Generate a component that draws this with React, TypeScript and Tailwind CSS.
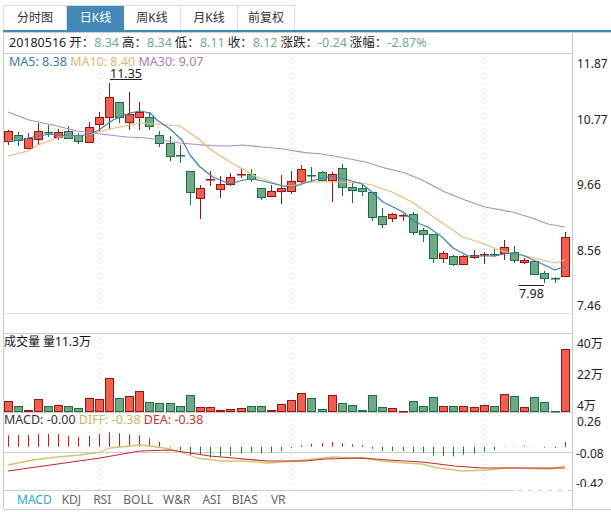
const XS = [8,18,28,38,48,58,68,78,89,99,109,119,129,139,149,159,170,180,190,200,210,220,230,241,251,261,271,281,291,301,311,322,332,342,352,362,372,382,392,403,413,423,433,443,453,463,474,484,494,504,514,524,534,544,555,565];
const G = new Set([1,4,6,7,11,14,15,16,17,18,24,25,30,31,33,34,35,36,37,40,41,42,44,48,50,52,53,54]);
// high, bodyTop, bodyBottom, low
const C: number[][] = [[130,131,141,145],[132,135,140,146],[133,138,148,149],[123,131,139,145],[125,132,133,137],[129,132,137,140],[126,131,138,138],[133,135,141,144],[122,127,142,143],[112,117,124,131],[83,97,117,129],[102,102,117,123],[92,114,122,130],[102,112,117,130],[112,117,126,130],[131,135,143,147],[136,143,156,161],[145,155,156,163],[171,171,192,205],[185,188,198,219],[171,179,180,186],[176,184,189,198],[173,177,184,186],[168,174,174,178],[169,174,179,182],[188,188,197,200],[185,191,196,197],[175,188,191,204],[171,181,191,194],[165,169,181,184],[167,175,175,182],[171,172,180,181],[172,174,180,202],[164,168,187,196],[182,187,190,203],[185,188,191,196],[192,192,217,221],[208,216,224,228],[213,214,218,222],[214,215,215,221],[212,214,232,235],[228,230,234,242],[234,234,258,263],[251,253,258,263],[255,256,264,266],[255,256,264,265],[250,255,257,259],[252,254,254,264],[249,254,254,257],[240,247,253,260],[246,252,260,263],[258,260,262,264],[261,261,274,275],[271,273,278,283],[277,278,278,283],[232,237,276,276]];
const VOL = [401,406,410,399,406,405,406,408,398,399,378,398,396,391,402,403,403,406,395,407,407,410,409,408,406,406,410,404,400,393,398,409,395,403,405,410,395,407,408,411,401,406,397,406,406,406,407,405,406,394,396,407,397,402,411,349];
const MACD = [76,75,75,72,72,72,77,81,78,72,67,70,73,76,85,96,108,122,135,135,143,140,137,130,128,130,128,124,114,105,101,100,96,100,103,105,116,123,123,123,127,128,136,137,139,134,130,125,120,111,111,107,111,113,114,96];
const MA30 = "8,112 29,120 57,126 77,131 100,134 127,137 147,138 180,143 210,145.7 230,146 243,145 263,147 283,149 305,152.7 322,154 345,158 365,162 385,168 405,173 422,180 445,192 465,200 485,207 512,212 532,218 548,224 565,227";
const MA10 = "8,156 28,151 38,145 60,137 70,136 87,135 110,129 140,123 157,124 180,126 200,140 210,149 230,162 257,177 280,185 292,186 305,182 315,182 338,182 362,183 372,185 392,192 412,202 435,218 463,237 482,243 502,251 522,255 538,259 555,263 565,260";
const MA5 = "8,142 20,140 33,137 50,134 67,136 87,135 97,131 100,129.3 113,120 130,113 140,111 150,113 157,120 170,129 182,140 190,155 200,167 213,177 230,184 243,180 253,179 267,182 283,186 293,187 305,183 315,180 332,176 345,179 362,184 372,192 383,202 403,212 415,222 428,227 442,237 453,248 468,256 495,256 508,253 522,255 538,262 555,270 565,266";
const DIFF = "8,465 33,460 57,457 80,455 100,452 110,448 140,445 150,446 170,449 180,452 197,458 220,461 243,461 267,463 283,462 305,460 332,457 362,458 382,461 405,463 422,464 438,468 462,471 488,470 505,468 552,469 565,466";
const DEA = "8,471 100,458 140,451 170,450 190,453 210,456 233,458 267,461 305,461 325,459 362,458 388,460 422,462 455,466 482,468 505,468 565,468";

const RED_F = "#ef5f4d", RED_S = "#9a1212", GRN_F = "#6fa987", GRN_S = "#1a7045";

function Dots({ y1, y2 }: { y1: number; y2: number }) {
  return (
    <>
      {[99.5, 291.5, 484.5].map((x) => (
        <line key={x} x1={x} x2={x} y1={y1} y2={y2} stroke="#c8c8c8" strokeWidth={1} strokeDasharray="1 4" />
      ))}
    </>
  );
}

const TABS = ["分时图", "日K线", "周K线", "月K线", "前复权"];
const SUBS = [
  ["MACD", "ml-[13px] text-[#2fa8d0]"],
  ["KDJ", "ml-[10px]"],
  ["RSI", "ml-[12px]"],
  ["BOLL", "ml-[12px]"],
  ["W&R", "ml-[10px]"],
  ["ASI", "ml-[12px]"],
  ["BIAS", "ml-[11px]"],
  ["VR", "ml-[13px]"],
];
const INFO = [
  ["开：", "8.34"],
  ["高：", "8.34"],
  ["低：", "8.11"],
  ["收：", "8.12"],
  ["涨跌：", "-0.24"],
  ["涨幅：", "-2.87%"],
];

export default function App() {
  return (
    <div className="relative w-[611px] h-[512px] overflow-hidden bg-white font-['Noto_Sans','Noto_Sans_CJK_SC',sans-serif] text-[#222]">
      {/* tabs */}
      <div className="pt-[5px] pl-[3px] h-[30px]">
        <div className="flex w-[293px] h-[25px] border-t border-l border-[#ddd]">
          {TABS.map((t, i) => (
            <div
              key={t}
              className={
                i === 0
                  ? "w-[63px] h-[24px] flex items-center justify-center text-[12px] border-r border-[#ddd] text-[#333]"
                  : i === 1
                  ? "w-[57px] h-[24px] flex items-center justify-center text-[12px] bg-[#4288b8] text-white"
                  : "w-[57px] h-[24px] flex items-center justify-center text-[12px] border-r border-[#ddd] text-[#333]"
              }
            >
              {t}
            </div>
          ))}
        </div>
      </div>
      <div className="ml-[3px] h-[2px] bg-[#4288b8]" />
      <div className="ml-[3px] h-px bg-[#d0d0d0]" />

      {/* main */}
      <div className="flex ml-[3px] w-[608px] h-[477px] border-b border-[#ccc]">
        <div className="w-[569px] border-l border-[#ccc] flex flex-col">
          <div className="h-[21px] border-b border-[#ccc] flex items-center pl-[5px] text-[12.5px] whitespace-pre leading-none">
            <span className="mr-[3px]">20180516</span>
            {INFO.map(([k, v]) => (
              <span key={k} className="mr-[3px]">
                {k}
                <span className="text-[#73ab8a]">{v}</span>
              </span>
            ))}
          </div>

          {/* price panel */}
          <div className="relative h-[260px] border-b border-[#ddd]">
            <svg width={568} height={259} viewBox="4 54 568 259" className="block">
              <Dots y1={58} y2={313} />
              {XS.map((x, i) => {
                const [h, t, b, l] = C[i];
                const g = G.has(i);
                const s = g ? GRN_S : RED_S;
                const cx = x + 0.5;
                return (
                  <g key={i}>
                    <line x1={cx} x2={cx} y1={h} y2={l} stroke={s} strokeWidth={1} />
                    {b - t < 2 ? (
                      <rect x={x - 4} y={t} width={9} height={1.5} fill={s} />
                    ) : (
                      <rect x={x - 3.5} y={t + 0.5} width={8} height={b - t} fill={g ? GRN_F : RED_F} stroke={s} strokeWidth={1} />
                    )}
                  </g>
                );
              })}
              <polyline points={MA30} fill="none" stroke="#b18cc0" strokeWidth={1.2} strokeLinejoin="round" />
              <polyline points={MA10} fill="none" stroke="#ebb97a" strokeWidth={1.2} strokeLinejoin="round" />
              <polyline points={MA5} fill="none" stroke="#3f7fb0" strokeWidth={1.2} strokeLinejoin="round" />
            </svg>
            <div className="absolute left-[5px] top-[1px] text-[12.5px] leading-[14px] whitespace-pre">
              <span className="text-[#3a7aab]">MA5: 8.38 </span>
              <span className="text-[#e9b46c]">MA10: 8.40 </span>
              <span className="text-[#a87bb5]">MA30: 9.07</span>
            </div>
            <div className="absolute left-[106px] top-[15px] w-[32px] text-center text-[12.5px] leading-[10px] border-b border-[#222]">11.35</div>
            <div className="absolute left-[515px] top-[231px] w-[25px] pt-[2px] text-center text-[12.5px] leading-[11px] border-t border-[#222]">7.98</div>
          </div>

          <div className="h-[19px]" />

          {/* volume panel */}
          <div className="relative h-[80px] border-t border-[#ccc]">
            <svg width={568} height={79} viewBox="4 334 568 79" className="block">
              <Dots y1={338} y2={413} />
              <line x1={4} x2={572} y1={412.5} y2={412.5} stroke="#ccc" />
              {XS.map((x, i) => {
                const g = G.has(i);
                return (
                  <rect key={i} x={x - 3.5} y={VOL[i] + 0.5} width={8} height={Math.max(412 - VOL[i] - 1, 0.5)} fill={g ? GRN_F : RED_F} stroke={g ? GRN_S : RED_S} strokeWidth={1} />
                );
              })}
            </svg>
            <div className="absolute left-0 -top-[1px] text-[12px] leading-[18px] whitespace-pre text-[#111]">成交量 量11.3万</div>
          </div>

          {/* macd panel */}
          <div className="relative h-[78px]">
            <svg width={568} height={78} viewBox="4 413 568 78" className="block">
              <Dots y1={414} y2={491} />
              <line x1={4} x2={572} y1={452.5} y2={452.5} stroke="#ccc" />
              <line x1={4} x2={515} y1={490.5} y2={490.5} stroke="#ccc" />
              <line x1={518} x2={572} y1={490.5} y2={490.5} stroke="#ccc" strokeDasharray="4 6" />
              {XS.map((x, i) => {
                const y = 410 + MACD[i] / 3;
                const base = 446.7;
                return (
                  <line key={i} x1={x + 0.5} x2={x + 0.5} y1={y} y2={base} stroke={y < base ? "#e81010" : "#0c8a1c"} strokeWidth={1} />
                );
              })}
              <polyline points={DIFF} fill="none" stroke="#cfc66e" strokeWidth={1.3} strokeLinejoin="round" />
              <polyline points={DEA} fill="none" stroke="#c9282a" strokeWidth={1.2} strokeLinejoin="round" />
            </svg>
            <div className="absolute left-0 -top-[1px] text-[12.5px] leading-[16px] whitespace-pre">
              <span className="text-[#333]">MACD: -0.00 </span>
              <span className="text-[#c4bb5b]">DIFF: -0.38 </span>
              <span className="text-[#cc3333]">DEA: -0.38</span>
            </div>
          </div>

          {/* indicator tabs */}
          <div className="h-[18px] flex items-center text-[12px] text-[#666] leading-none">
            {SUBS.map(([t, c]) => (
              <span key={t} className={c}>{t}</span>
            ))}
          </div>
        </div>

        {/* axis */}
        <div className="flex-1 border-l border-[#ccc] pl-[4px] flex flex-col text-[12px] leading-[16px] text-[#222]">
          <div className="mt-[23px]">11.87</div>
          <div className="mt-[40px]">10.77</div>
          <div className="mt-[49px]">9.66</div>
          <div className="mt-[50px]">8.56</div>
          <div className="mt-[39px]">7.46</div>
          <div className="mt-[22px]">40万</div>
          <div className="mt-[15px]">22万</div>
          <div className="mt-[15px]">4万</div>
          <div className="mt-0">0.26</div>
          <div className="mt-[16px] -ml-[1px]">-0.08</div>
          <div className="mt-[14px] -ml-[1px] h-[11px] overflow-hidden">-0.42</div>
        </div>
      </div>
    </div>
  );
}
